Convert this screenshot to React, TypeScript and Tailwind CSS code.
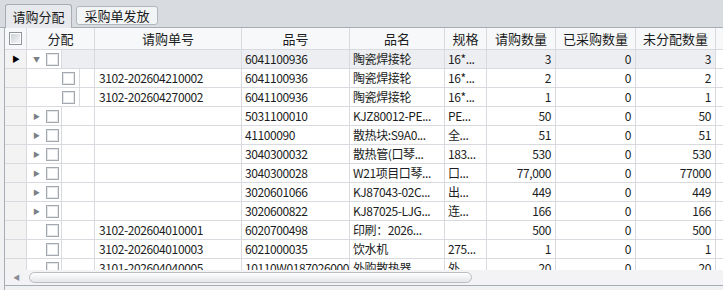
import { ReactNode } from "react";

type Row = {
  kind: "parent" | "child" | "collapsed" | "leaf";
  req?: string;
  code: string;
  name: string;
  spec: string;
  qty: string;
  done: string;
  left: string;
  selected?: boolean;
};

const rows: Row[] = [
  { kind: "parent", code: "6041100936", name: "陶瓷焊接轮", spec: "16*...", qty: "3", done: "0", left: "3", selected: true },
  { kind: "child", req: "3102-202604210002", code: "6041100936", name: "陶瓷焊接轮", spec: "16*...", qty: "2", done: "0", left: "2" },
  { kind: "child", req: "3102-202604270002", code: "6041100936", name: "陶瓷焊接轮", spec: "16*...", qty: "1", done: "0", left: "1" },
  { kind: "collapsed", code: "5031100010", name: "KJZ80012-PE...", spec: "PE...", qty: "50", done: "0", left: "50" },
  { kind: "collapsed", code: "41100090", name: "散热块:S9A0...", spec: "全...", qty: "51", done: "0", left: "51" },
  { kind: "collapsed", code: "3040300032", name: "散热管(口琴...", spec: "183...", qty: "530", done: "0", left: "530" },
  { kind: "collapsed", code: "3040300028", name: "W21项目口琴...", spec: "口...", qty: "77,000", done: "0", left: "77000" },
  { kind: "collapsed", code: "3020601066", name: "KJ87043-02C...", spec: "出...", qty: "449", done: "0", left: "449" },
  { kind: "collapsed", code: "3020600822", name: "KJ87025-LJG...", spec: "连...", qty: "166", done: "0", left: "166" },
  { kind: "leaf", req: "3102-202604010001", code: "6020700498", name: "印刷：2026...", spec: "", qty: "500", done: "0", left: "500" },
  { kind: "leaf", req: "3102-202604010003", code: "6021000035", name: "饮水机", spec: "275...", qty: "1", done: "0", left: "1" },
  { kind: "leaf", req: "3101-202604040005", code: "10110W01870260001", name: "外购散热器", spec: "外", qty: "20", done: "0", left: "20" },
];

const line = "border-[#d9dadf]";

function Check() {
  return (
    <span className="flex h-[13px] w-[13px] items-center justify-center border border-[#a3a7ae] bg-[#e4e6ea]">
      <span className="h-[9px] w-[9px] bg-white" />
    </span>
  );
}

function Cell({ children, right, className = "" }: { children?: ReactNode; right?: boolean; className?: string }) {
  return (
    <div
      className={`flex items-center overflow-hidden whitespace-nowrap border-r ${line} px-[3px] tracking-[-0.4px] ${
        right ? "justify-end pr-[4px]" : ""
      } ${className}`}
    >
      {children}
    </div>
  );
}

function TreeCell({ row }: { row: Row }) {
  if (row.kind === "child") {
    return (
      <div className={`flex border-r ${line}`}>
        <div className={`flex w-[53px] items-center justify-end border-r ${line} pr-[4px]`}>
          <Check />
        </div>
        <div className="flex-1" />
      </div>
    );
  }
  return (
    <div className={`flex border-r ${line}`}>
      <div className={`flex w-[35px] items-center border-r ${line} pl-[6px]`}>
        <span className="w-[13px] text-[7px] leading-none text-[#7b7f86]">
          {row.kind === "parent" ? "▼" : row.kind === "collapsed" ? "▶" : ""}
        </span>
        <Check />
      </div>
      <div className={row.selected ? "flex-1 bg-[#eceef1]" : "flex-1"} />
    </div>
  );
}

function GridRow({ row }: { row: Row }) {
  const bg = row.selected ? "bg-[#eceef1]" : "";
  return (
    <div className={`grid h-[19px] shrink-0 grid-cols-[22px_68px_147px_108px_95px_42px_69px_80px_80px_1fr] border-b ${line}`}>
      <div className={`flex items-center border-r ${line} bg-[#f3f3f4] pl-[7px]`}>
        {row.selected && <span className="text-[8px] leading-none text-black">▶</span>}
      </div>
      <TreeCell row={row} />
      <Cell className={`${bg} pl-[4px]`}>{row.req}</Cell>
      <Cell className={bg}>{row.code}</Cell>
      <Cell className={bg}>{row.name}</Cell>
      <Cell className={bg}>{row.spec}</Cell>
      <Cell right className={bg}>{row.qty}</Cell>
      <Cell right className={bg}>{row.done}</Cell>
      <Cell right className={bg}>{row.left}</Cell>
      <div />
    </div>
  );
}

const headers = ["分配", "请购单号", "品号", "品名", "规格", "请购数量", "已采购数量", "未分配数量"];

export default function App() {
  return (
    <div
      className="flex h-[290px] w-[723px] flex-col overflow-hidden bg-[#f0f1f3] text-[12px] leading-none text-[#1b1d22]"
      style={{ fontFamily: '"Noto Sans CJK SC", "Noto Sans", sans-serif' }}
    >
      <div className="flex h-[28px] shrink-0 items-end gap-[4px] border-b border-[#a9adb3] bg-[#d8dbdf] pl-[5px]">
        <div className="-mb-px flex h-[24px] w-[67px] items-center justify-center rounded-t-[3px] border border-b-0 border-[#a9adb3] bg-[#e7e9ec] text-[13px]">
          请购分配
        </div>
        <div className="mb-[2px] flex h-[19px] w-[82px] items-center justify-center rounded-[3px] border border-[#b3b7bd] bg-[#f3f4f6] text-[13px]">
          采购单发放
        </div>
      </div>
      <div className="ml-[4px] flex flex-1 flex-col overflow-hidden border-l border-[#a9adb3] bg-white">
        <div className={`grid h-[22px] shrink-0 grid-cols-[22px_68px_147px_108px_95px_42px_69px_80px_80px_1fr] border-b ${line} bg-[#f7f8f9]`}>
          <div className={`flex items-center justify-center border-r ${line}`}>
            <span className="flex h-[13px] w-[13px] items-center justify-center border border-[#8f949b] bg-white">
              <span className="h-[9px] w-[9px] bg-gradient-to-br from-[#cfd2d6] to-[#f4f5f6]" />
            </span>
          </div>
          {headers.map((h) => (
            <div key={h} className={`flex items-center justify-center border-r ${line} text-[13px]`}>
              {h}
            </div>
          ))}
          <div />
        </div>
        <div className="flex h-[220px] flex-col overflow-hidden">
          {rows.map((r, i) => (
            <GridRow key={i} row={r} />
          ))}
        </div>
        <div className="flex h-[15px] shrink-0 items-center bg-[#f3f3f5] pl-[8px]">
          <span className="w-[16px] text-[7px] text-[#8a8e95]">◀</span>
          <div className="h-[11px] w-[443px] rounded-full border border-[#b9bcc1] bg-gradient-to-b from-white to-[#e4e5e8]" />
        </div>
        <div className="flex-1 border-t border-[#a9adb3] bg-[#f0f1f3]" />
      </div>
    </div>
  );
}
